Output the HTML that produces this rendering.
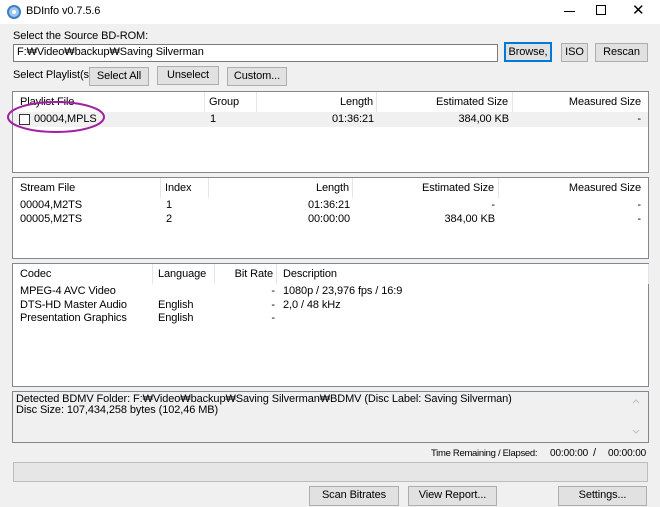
<!DOCTYPE html>
<html><head><style>
*{margin:0;padding:0;box-sizing:border-box}
body{width:660px;height:507px;background:#f0f0f0;font-family:"Liberation Sans","Noto Sans CJK KR",sans-serif;font-size:11px;color:#000;position:relative;overflow:hidden;letter-spacing:-0.1px}
.a{position:absolute;white-space:nowrap}
.btn{position:absolute;background:#e1e1e1;border:1px solid #adadad;text-align:center;line-height:17px}
.panel{position:absolute;background:#fff;border:1px solid #828790}
.hd{position:absolute;top:0;height:20px;line-height:20px;border-right:1px solid #e5e5e5}
.r{text-align:right}
</style></head><body>
<div class="a" style="left:0;top:0;width:660px;height:24px;background:#fff"></div>
<svg class="a" style="left:6px;top:4px" width="16" height="16"><circle cx="8" cy="8" r="7" fill="#3d7fc4"/><circle cx="8" cy="8" r="5" fill="#9ec8ee"/><circle cx="8" cy="8" r="2" fill="#fff"/></svg>
<div class="a" style="left:26px;top:5px;font-size:11px">BDInfo v0.7.5.6</div>
<div class="a" style="left:564px;top:11px;width:11px;height:1px;background:#000"></div>
<div class="a" style="left:596px;top:5px;width:10px;height:10px;border:1px solid #000"></div>
<div class="a" style="left:632px;top:1px;font-size:15px">✕</div>

<div class="a" style="left:13px;top:30px">Select the Source BD-ROM:</div>
<div class="a" style="left:13px;top:44px;width:485px;height:18px;background:#fff;border:1px solid #7a7a7a;padding:1px 3px">F:₩Video₩backup₩Saving Silverman</div>
<div class="btn" style="left:504px;top:42px;width:48px;height:20px;border:2px solid #0078d7">Browse,</div>
<div class="btn" style="left:561px;top:43px;width:27px;height:19px">ISO</div>
<div class="btn" style="left:595px;top:43px;width:53px;height:19px">Rescan</div>

<div class="a" style="left:13px;top:69px;width:76px;overflow:hidden">Select Playlist(s):</div>
<div class="btn" style="left:89px;top:67px;width:60px;height:19px">Select All</div>
<div class="btn" style="left:157px;top:66px;width:62px;height:19px">Unselect</div>
<div class="btn" style="left:227px;top:67px;width:60px;height:19px">Custom...</div>

<div class="panel" style="left:12px;top:91px;width:637px;height:82px">
 <div class="hd" style="left:0;width:192px;padding-left:7px">Playlist File</div>
 <div class="hd" style="left:192px;width:52px;padding-left:4px">Group</div>
 <div class="hd r" style="left:244px;width:120px;padding-right:3px">Length</div>
 <div class="hd r" style="left:364px;width:136px;padding-right:4px">Estimated Size</div>
 <div class="hd r" style="left:500px;width:136px;padding-right:8px;border:0">Measured Size</div>
 <div class="a" style="left:0;top:20px;width:635px;height:15px;background:#f0f0f0"></div>
 <div class="a" style="left:6px;top:22px;width:11px;height:11px;border:1px solid #333;background:#fff"></div>
 <div class="a" style="left:21px;top:21px">00004,MPLS</div>
 <div class="a" style="left:197px;top:21px">1</div>
 <div class="a r" style="left:244px;top:21px;width:117px">01:36:21</div>
 <div class="a r" style="left:364px;top:21px;width:132px">384,00 KB</div>
 <div class="a r" style="left:500px;top:21px;width:128px">-</div>
</div>
<svg class="a" style="left:4px;top:98px" width="106" height="38"><ellipse cx="52" cy="19" rx="48" ry="15" fill="none" stroke="#a020a0" stroke-width="2"/></svg>

<div class="panel" style="left:12px;top:177px;width:637px;height:82px">
 <div class="hd" style="left:0;width:148px;padding-left:7px">Stream File</div>
 <div class="hd" style="left:148px;width:48px;padding-left:4px">Index</div>
 <div class="hd r" style="left:196px;width:144px;padding-right:3px">Length</div>
 <div class="hd r" style="left:340px;width:146px;padding-right:4px">Estimated Size</div>
 <div class="hd r" style="left:486px;width:150px;padding-right:8px;border:0">Measured Size</div>
 <div class="a" style="left:7px;top:21px">00004,M2TS</div><div class="a" style="left:153px;top:21px">1</div>
 <div class="a r" style="left:196px;top:21px;width:141px">01:36:21</div><div class="a r" style="left:340px;top:21px;width:142px">-</div><div class="a r" style="left:486px;top:21px;width:142px">-</div>
 <div class="a" style="left:7px;top:35px">00005,M2TS</div><div class="a" style="left:153px;top:35px">2</div>
 <div class="a r" style="left:196px;top:35px;width:141px">00:00:00</div><div class="a r" style="left:340px;top:35px;width:142px">384,00 KB</div><div class="a r" style="left:486px;top:35px;width:142px">-</div>
</div>

<div class="panel" style="left:12px;top:263px;width:637px;height:124px">
 <div class="hd" style="left:0;width:140px;padding-left:7px">Codec</div>
 <div class="hd" style="left:140px;width:62px;padding-left:5px">Language</div>
 <div class="hd r" style="left:202px;width:62px;padding-right:3px">Bit Rate</div>
 <div class="hd" style="left:264px;width:372px;padding-left:6px">Description</div>
 <div class="a" style="left:7px;top:21px">MPEG-4 AVC Video</div><div class="a r" style="left:202px;top:21px;width:60px">-</div><div class="a" style="left:270px;top:21px">1080p / 23,976 fps / 16:9</div>
 <div class="a" style="left:7px;top:35px">DTS-HD Master Audio</div><div class="a" style="left:145px;top:35px">English</div><div class="a r" style="left:202px;top:35px;width:60px">-</div><div class="a" style="left:270px;top:35px">2,0 / 48 kHz</div>
 <div class="a" style="left:7px;top:48px">Presentation Graphics</div><div class="a" style="left:145px;top:48px">English</div><div class="a r" style="left:202px;top:48px;width:60px">-</div>
</div>

<div class="a" style="left:12px;top:391px;width:637px;height:52px;border:1px solid #828790;background:#f0f0f0;padding:2px 3px;line-height:11px;font-size:11px">Detected BDMV Folder: F:₩Video₩backup₩Saving Silverman₩BDMV (Disc Label: Saving Silverman)<br>Disc Size: 107,434,258 bytes (102,46 MB)</div>
<svg class="a" style="left:631px;top:396px" width="10" height="44"><path d="M2 7 L5 4 L8 7" fill="none" stroke="#c0c0c0"/><path d="M2 34 L5 37 L8 34" fill="none" stroke="#c0c0c0"/></svg>

<div class="a" style="left:431px;top:448px;font-size:9.5px;letter-spacing:-0.3px">Time Remaining / Elapsed:</div>
<div class="a" style="left:550px;top:448px;font-size:10px">00:00:00</div>
<div class="a" style="left:593px;top:447px">/</div>
<div class="a" style="left:608px;top:448px;font-size:10px">00:00:00</div>
<div class="a" style="left:13px;top:462px;width:635px;height:20px;background:#e6e6e6;border:1px solid #bcbcbc"></div>

<div class="btn" style="left:309px;top:486px;width:90px;height:20px">Scan Bitrates</div>
<div class="btn" style="left:408px;top:486px;width:89px;height:20px">View Report...</div>
<div class="btn" style="left:558px;top:486px;width:89px;height:20px">Settings...</div>
</body></html>
